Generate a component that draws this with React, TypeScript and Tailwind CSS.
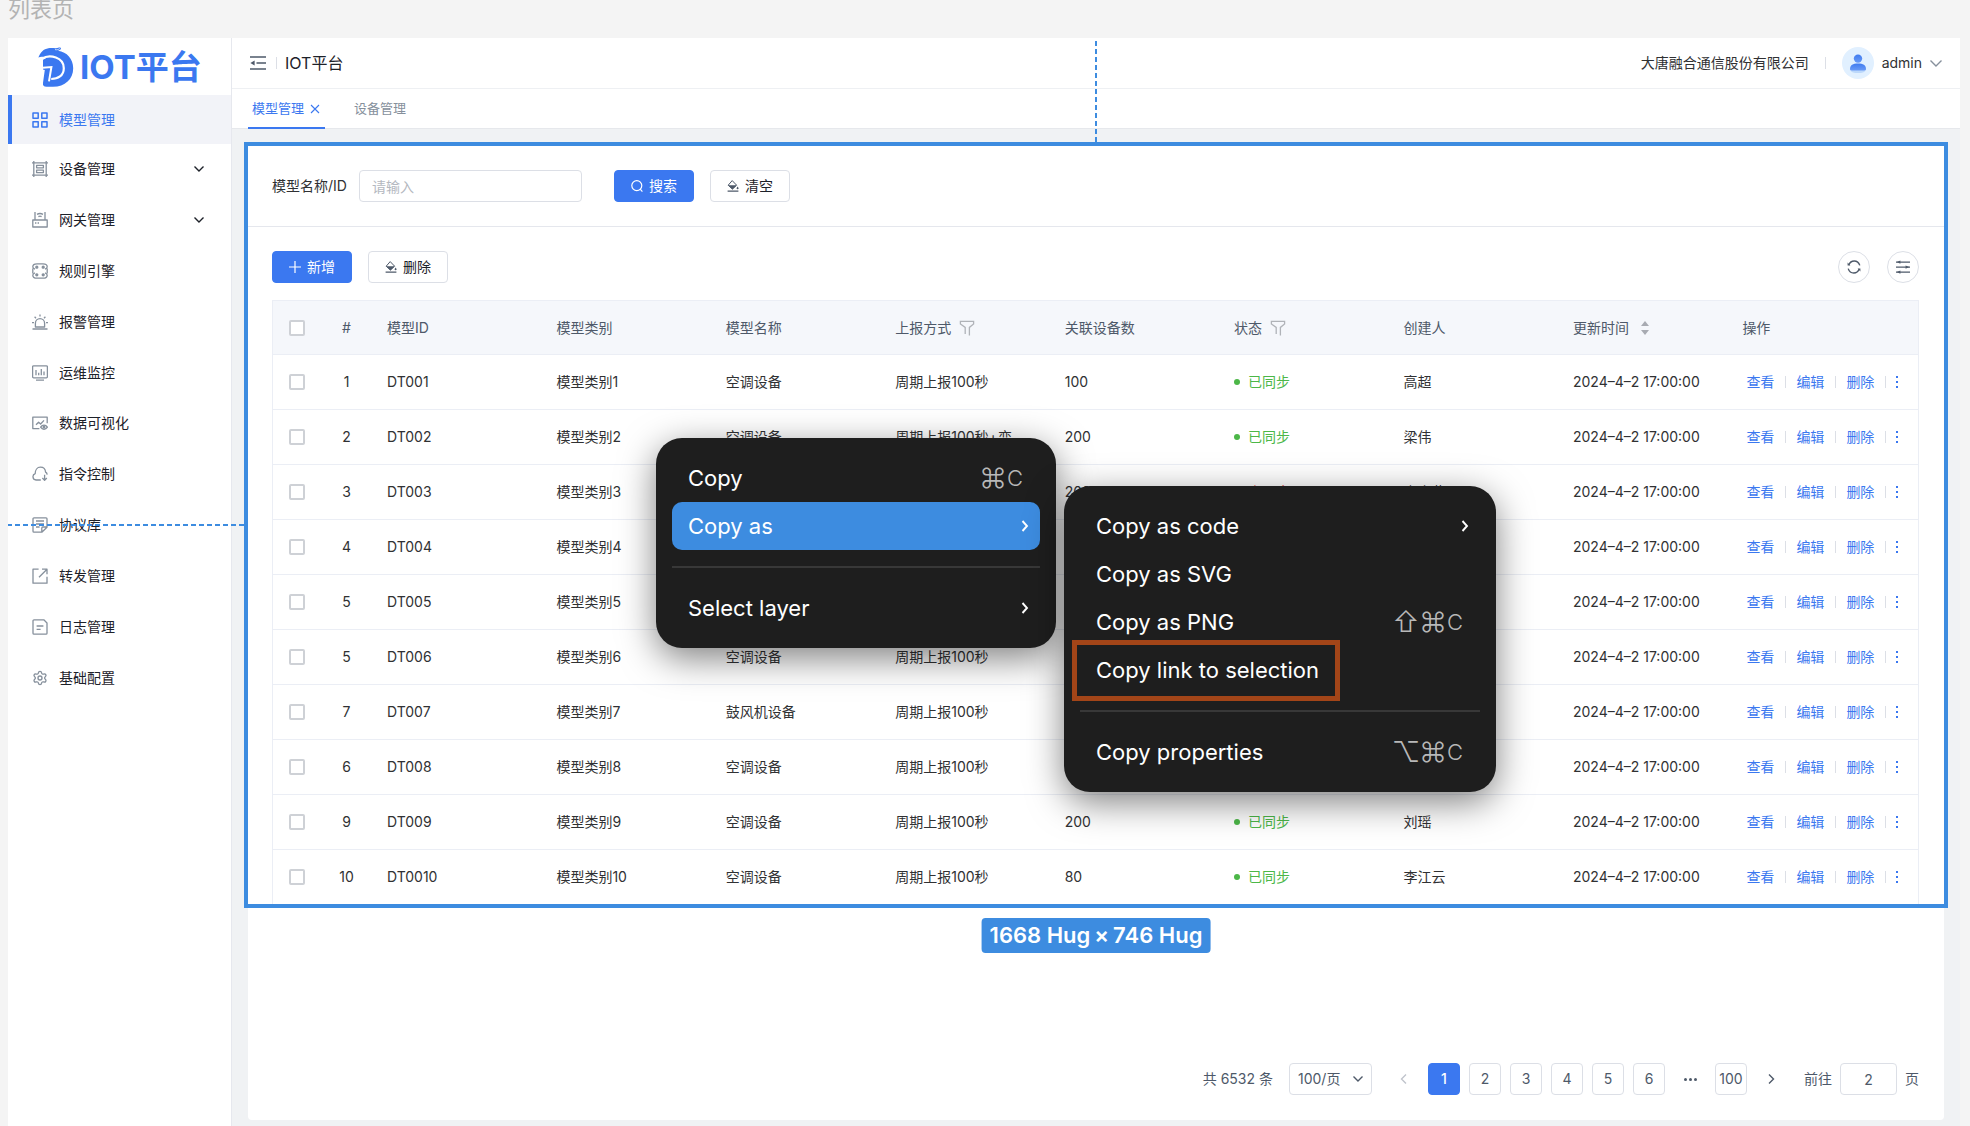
import React from 'react';
import { Settings } from 'lucide-react';

interface NavItem {
  label: string;
  icon: React.ReactNode;
  expandable?: boolean;
}

interface ModelRow {
  no: number;
  id: string;
  category: string;
  name: string;
  report: string;
  devices: number;
  synced: boolean;
  creator: string;
}

function NavIcon({ children }: { children: React.ReactNode }) {
  return (
    <svg
      viewBox="0 0 16 16"
      className="size-4 shrink-0"
      fill="none"
      stroke="currentColor"
      strokeWidth="1.3"
      strokeLinejoin="round"
      aria-hidden="true"
    >
      {children}
    </svg>
  );
}

const NAV_ITEMS: NavItem[] = [
  {
    label: '模型管理',
    icon: (
      <NavIcon>
        <path d="M1 1h5.2v5.2H1zM9.8 1H15v5.2H9.8zM1 9.8h5.2V15H1zM9.8 9.8H15V15H9.8z" strokeWidth="1.5" />
      </NavIcon>
    ),
  },
  {
    label: '设备管理',
    expandable: true,
    icon: (
      <NavIcon>
        <path d="M1.8 0v16M14.2 0v16M0 1.8h16M0 14.2h16" />
        <path d="M4.6 4.4h6.8v2.4H4.6zM4.6 9.2h6.8v2.4H4.6z" />
      </NavIcon>
    ),
  },
  {
    label: '网关管理',
    expandable: true,
    icon: (
      <NavIcon>
        <path d="M.8 8h14.4v7H.8zM3 8V0M13 8V0" />
        <path d="M3 11h1.4M5.600 11H7M5 2.4c2-1.2 4-1.2 6 0M6.4 4.600c1-.7 2.2-.7 3.2 0" />
      </NavIcon>
    ),
  },
  {
    label: '规则引擎',
    icon: (
      <NavIcon>
        <path d="M5 .8h6M5 15.2h6M.8 5.4v5.2M15.2 5.4v5.2" />
        <path d="M5 .8C2 .8.8 2 .8 3.8c0 1.4.8 2 2.2 2.4M11 .8c3 0 4.2 1.2 4.2 3 0 1.4-.8 2-2.2 2.4M5 15.2c-3 0-4.2-1.2-4.2-3 0-1.4.8-2 2.2-2.4M11 15.2c3 0 4.2-1.2 4.2-3 0-1.4-.8-2-2.2-2.4" />
        <circle cx="4.8" cy="4.2" r="1" fill="currentColor" />
        <circle cx="11.2" cy="4.2" r="1" fill="currentColor" />
        <circle cx="4.8" cy="11.8" r="1" fill="currentColor" />
        <circle cx="11.2" cy="11.8" r="1" fill="currentColor" />
      </NavIcon>
    ),
  },
  {
    label: '报警管理',
    icon: (
      <NavIcon>
        <path d="M.5 15h15M3.4 13V9.2a4.6 4.6 0 0 1 9.2 0V13zM0 8.6h2M14 8.6h2M8 .4v2M2.6 2.8 4 4.2M13.4 2.8 12 4.2" />
      </NavIcon>
    ),
  },
  {
    label: '运维监控',
    icon: (
      <NavIcon>
        <rect x=".6" y=".8" width="14.8" height="12" rx="1" />
        <path d="M4 5v5.2M6.7 7.8v2.4M9.3 4v6.2M12 6.6v3.6M4 15.2h8" />
      </NavIcon>
    ),
  },
  {
    label: '数据可视化',
    icon: (
      <NavIcon>
        <path d="M7.4 13.6H.8V2.2h14.4v6" />
        <path d="m4 9.8 2.6-2.6L8.6 9 12 5.4" />
        <path d="M8.600 12.2c1.8-2.8 5-2.8 6.8 0-1.8 2.8-5 2.8-6.8 0z" />
        <circle cx="12" cy="12.2" r=".8" />
      </NavIcon>
    ),
  },
  {
    label: '指令控制',
    icon: (
      <NavIcon>
        <path d="M8.800 14H4A3.3 3.3 0 0 1 3.200 7.600C3.200 4 5.200 1.200 8.400 1.200c3 0 5 2 5.200 5 .8.400 1.400 1.200 1.600 2.400M12.600 8.800V14M10.400 12l2.200 2.400L14.800 12" />
      </NavIcon>
    ),
  },
  {
    label: '协议库',
    icon: (
      <NavIcon>
        <path d="M9.8 15.2H2a1 1 0 0 1-1-1V1.8a1 1 0 0 1 1-1h12a1 1 0 0 1 1 1v8.4l-5.2 5zM9.8 15V11a1 1 0 0 1 1-1H15M4 4h8M4 7h8M4 10h3.6" />
      </NavIcon>
    ),
  },
  {
    label: '转发管理',
    icon: (
      <NavIcon>
        <path d="M6.6 1.2H1v14h14V8.800M10 1.2h5v5M15 1.2l-8 8" />
      </NavIcon>
    ),
  },
  {
    label: '日志管理',
    icon: (
      <NavIcon>
        <path d="M2 .8h9.8L15 4v10.2a1 1 0 0 1-1 1H2a1 1 0 0 1-1-1V1.8a1 1 0 0 1 1-1zM4.6 7h6.8M4.6 10.4h4" />
      </NavIcon>
    ),
  },
  { label: '基础配置', icon: <Settings className="size-4 shrink-0" strokeWidth={2} aria-hidden="true" /> },
];

const ROWS: ModelRow[] = [
  { no: 1, id: 'DT001', category: '模型类别1', name: '空调设备', report: '周期上报100秒', devices: 100, synced: true, creator: '高超' },
  { no: 2, id: 'DT002', category: '模型类别2', name: '空调设备', report: '周期上报100秒+变', devices: 200, synced: true, creator: '梁伟' },
  { no: 3, id: 'DT003', category: '模型类别3', name: '空调设备', report: '周期上报100秒', devices: 200, synced: false, creator: '李小燕' },
  { no: 4, id: 'DT004', category: '模型类别4', name: '空调设备', report: '周期上报100秒', devices: 200, synced: true, creator: '高超' },
  { no: 5, id: 'DT005', category: '模型类别5', name: '空调设备', report: '周期上报100秒', devices: 200, synced: true, creator: '梁伟' },
  { no: 5, id: 'DT006', category: '模型类别6', name: '空调设备', report: '周期上报100秒', devices: 200, synced: true, creator: '刘瑶' },
  { no: 7, id: 'DT007', category: '模型类别7', name: '鼓风机设备', report: '周期上报100秒', devices: 100, synced: true, creator: '高超' },
  { no: 6, id: 'DT008', category: '模型类别8', name: '空调设备', report: '周期上报100秒', devices: 200, synced: true, creator: '梁伟' },
  { no: 9, id: 'DT009', category: '模型类别9', name: '空调设备', report: '周期上报100秒', devices: 200, synced: true, creator: '刘瑶' },
  { no: 10, id: 'DT0010', category: '模型类别10', name: '空调设备', report: '周期上报100秒', devices: 80, synced: true, creator: '李江云' },
];

function Chevron({ className = '', d = 'm1.5 3.5 4.5 4.5 4.5-4.5', width = 1.4 }) {
  return (
    <svg viewBox="0 0 12 12" className={`size-3 shrink-0 ${className}`} fill="none" stroke="currentColor" strokeWidth={width} aria-hidden="true">
      <path d={d} />
    </svg>
  );
}

function BucketIcon() {
  return (
    <svg viewBox="0 0 12 12" className="size-3 shrink-0 text-[#4e5969]" aria-hidden="true">
      <path d="M5.2.6 9.6 5.2 5.4 9 1.2 5.2z" fill="none" stroke="currentColor" />
      <path d="M1 5.2h8.8L5.4 9.4zM10.600 6.4c.8 1 1 1.5 1 1.9a1 1 0 0 1-2 0c0-.4.3-.9 1-1.9zM.6 10.600h10.8v1.2H.6z" fill="currentColor" />
    </svg>
  );
}

function FilterIcon() {
  return (
    <svg viewBox="0 0 16 16" className="size-4 text-[#b0b3b8]" fill="none" stroke="currentColor" strokeWidth="1.3" aria-hidden="true">
      <path d="M6.2 14V7.4L1.4 4V1.4h13.2V4l-4.2 3.4v8.2" />
    </svg>
  );
}

function Logo() {
  return (
    <svg viewBox="0 0 36 40" className="h-10 w-9 shrink-0" aria-hidden="true">
      <path
        d="M.4 10.6C2.4 5 5.6 2 10.4 1.2c4-.8 7.2.8 10.6-.6 1-.4 2 .2 2 1-.2 1.2-1.4 1.8-3 2.2C29 5 35.2 12 35.2 21.2 35.2 32 27 39.8 15 39.8H8.600c-3 0-4-1.4-3.600-4L6.800 23 5 22.600V12.800L8 11.200C5.200 9.200 2.400 9.600.4 10.600z"
        fill="#3b78f0"
      />
      <path d="M3.600 11.800C12 6.800 25.800 10.400 25.800 21.200c0 7.600-6 10.800-12.600 10.800" fill="none" stroke="#fff" strokeWidth="2.200" />
      <path d="M4.600 20.800 13.400 20 11 34.400" fill="none" stroke="#fff" strokeWidth="2" />
      <path d="M17 2.600c2 .4 3.600 0 4.800-1.200" fill="none" stroke="#fff" strokeWidth=".7" />
    </svg>
  );
}

function NavLink({ item, active = false }: { item: NavItem; active?: boolean }) {
  return (
    <a
      href="#"
      className={`flex items-center gap-[11px] border-l-4 pr-[26px] pl-5 text-sm ${
        active ? 'h-[49px] border-[#3b78f0] bg-[#f2f3f8] text-[#3b78f0]' : 'border-transparent text-[#1d2129]'
      }`}
    >
      <span className={active ? 'text-[#3b78f0]' : 'text-[#86909c]'}>{item.icon}</span>
      <span className="flex-1">{item.label}</span>
      {item.expandable && <Chevron />}
    </a>
  );
}

function Sidebar() {
  const [current, ...others] = NAV_ITEMS;

  return (
    <aside className="w-[224px] shrink-0 border-r border-[#e6e8ee] bg-white">
      <div className="flex h-[57px] items-center gap-[6px] pl-[30px]">
        <Logo />
        <span className="text-[33px] leading-10 font-bold whitespace-nowrap text-[#3b78f0]">IOT平台</span>
      </div>
      <nav>
        <NavLink item={current} active />
        <div className="grid h-[559px] auto-rows-fr">
          {others.map((item) => (
            <NavLink key={item.label} item={item} />
          ))}
        </div>
      </nav>
    </aside>
  );
}

function TopBar() {
  return (
    <header className="flex h-[51px] items-center justify-between border-b border-[#eef0f3] bg-white px-[18px] text-sm">
      <div className="flex items-center">
        <button type="button" aria-label="收起菜单" className="text-[#4e5969]">
          <svg viewBox="0 0 16 14" className="h-[14px] w-4" fill="none" stroke="currentColor" strokeWidth="1.4" aria-hidden="true">
            <path d="M0 1h16M6.5 7H16M0 13h16" />
            <path d="M4.6 4.4v5.2L.4 7z" fill="currentColor" stroke="none" />
          </svg>
        </button>
        <span className="mr-2 ml-[10px] h-3 w-px bg-[#dcdfe6]" />
        <h1 className="text-base text-[#1d2129]">IOT平台</h1>
      </div>
      <div className="flex items-center text-[#303133]">
        <span>大唐融合通信股份有限公司</span>
        <span className="mx-4 h-3 w-px bg-[#dcdfe6]" />
        <button type="button" className="flex items-center gap-2">
          <svg viewBox="0 0 32 32" className="size-8" aria-hidden="true">
            <defs>
              <linearGradient id="person" x1="0" y1="0" x2="0" y2="1">
                <stop offset="0" stopColor="#3f7bf0" />
                <stop offset="1" stopColor="#6a9bf6" />
              </linearGradient>
            </defs>
            <circle cx="16" cy="16" r="16" fill="#e1f0ff" />
            <ellipse cx="16" cy="24" rx="7" ry="2" fill="#bcd8fb" />
            <path d="M8 22c0-4 3-5.6 8-5.6s8 1.6 8 5.6c0 1-.6 1.6-1.6 1.6H9.600C8.600 23.600 8 23 8 22z" fill="url(#person)" />
            <circle cx="16" cy="11.6" r="4.2" fill="url(#person)" />
          </svg>
          <span>admin</span>
          <Chevron className="text-[#86909c]" d="m.5 3.5 5.5 5.5 5.5-5.5" />
        </button>
      </div>
    </header>
  );
}

function TabBar() {
  return (
    <div className="flex h-10 border-b border-[#e6e8ec] bg-white pl-4 text-[13px]">
      <div className="-mb-px flex items-center gap-[6px] border-b-2 border-[#3b78f0] px-1 pt-[2px] text-[#3b78f0]">
        <a href="#">模型管理</a>
        <button type="button" aria-label="关闭" className="pr-px">
          <svg viewBox="0 0 10 10" className="size-[10px]" fill="none" stroke="currentColor" strokeWidth="1.1" aria-hidden="true">
            <path d="m1 1 8 8M9 1 1 9" />
          </svg>
        </button>
      </div>
      <a href="#" className="ml-[29px] flex items-center pt-px text-[#86909c]">
        设备管理
      </a>
    </div>
  );
}

const primaryButton =
  'flex h-8 w-20 items-center justify-center gap-[6px] rounded border border-[#3b78f0] bg-[#3b78f0] text-sm text-white';
const plainButton =
  'flex h-8 w-20 items-center justify-center gap-[6px] rounded border border-[#dcdfe6] bg-white text-sm text-[#1d2129]';
const roundButton = 'flex size-8 items-center justify-center rounded-full border border-[#dcdfe6] text-[#4e5969]';

function SearchBar() {
  return (
    <form className="flex h-[81px] items-center border-b border-[#e5e7ed] px-6 text-sm">
      <label htmlFor="keyword" className="text-[#303133]">
        模型名称/ID
      </label>
      <input
        id="keyword"
        placeholder="请输入"
        className="ml-3 h-8 w-[223px] rounded border border-[#dcdfe6] px-3 placeholder:text-[#b4b8bf]"
      />
      <button type="button" className={`ml-8 ${primaryButton}`}>
        <svg viewBox="0 0 12 12" className="size-3" fill="none" stroke="currentColor" strokeWidth="1.2" aria-hidden="true">
          <circle cx="5.8" cy="5.6" r="5" />
          <path d="m9.2 9.2 2.2 2.4" />
        </svg>
        搜索
      </button>
      <button type="button" className={`ml-4 ${plainButton}`}>
        <BucketIcon />
        清空
      </button>
    </form>
  );
}

function Toolbar() {
  return (
    <div className="flex items-center pt-6 pr-[25px] pb-[17px] pl-6">
      <button type="button" className={primaryButton}>
        <svg viewBox="0 0 12 12" className="size-3" stroke="currentColor" strokeWidth="1.2" aria-hidden="true">
          <path d="M6 0v12M0 6h12" />
        </svg>
        新增
      </button>
      <button type="button" className={`ml-4 ${plainButton}`}>
        <BucketIcon />
        删除
      </button>
      <button type="button" aria-label="刷新" className={`ml-auto ${roundButton}`}>
        <svg viewBox="0 0 14 14" className="size-[14px]" fill="none" stroke="currentColor" strokeWidth="1.4" aria-hidden="true">
          <path d="M1.8 5C2.800 2.400 5 1 7.200 1c2.400 0 4.600 1.400 5.600 4.400M12.200 9C11.200 11.600 9 13 6.800 13c-2.400 0-4.600-1.400-5.600-4.400" />
          <path d="M.6 2.600v3h2.800zM13.400 11.400v-3h-2.800z" fill="currentColor" stroke="none" />
        </svg>
      </button>
      <button type="button" aria-label="列设置" className={`ml-[17px] ${roundButton}`}>
        <svg viewBox="0 0 14 14" className="size-[14px]" fill="currentColor" aria-hidden="true">
          <path d="M0 1.4h14v1.3H0zM0 6.4h14v1.3H0zM0 11.4h14v1.3H0z" />
          <path d="M4.400.4v3.300L.8 2zM9.600 5.400v3.300L13.200 7zM4.400 10.400v3.300L.8 12z" />
        </svg>
      </button>
    </div>
  );
}

function RowCheckbox({ label }: { label: string }) {
  return (
    <input
      type="checkbox"
      aria-label={label}
      className="block size-4 appearance-none rounded-xs border-2 border-[#ced1d6] bg-white"
    />
  );
}

function Separator() {
  return <span className="mr-[10px] ml-[11px] h-3 w-px bg-[#dcdfe6]" />;
}

function RowActions() {
  return (
    <div className="flex items-center pl-1 text-[#3b78f0]">
      <a href="#">查看</a>
      <Separator />
      <a href="#">编辑</a>
      <Separator />
      <a href="#">删除</a>
      <Separator />
      <button type="button" aria-label="更多">
        <svg viewBox="0 0 2 12" className="h-3 w-[2px]" fill="currentColor" aria-hidden="true">
          <path d="M0 0h2v2H0zM0 5h2v2H0zM0 10h2v2H0z" />
        </svg>
      </button>
    </div>
  );
}

const headCell = 'h-[55px] w-[10.3%] border-y border-b-[#ebeef5] border-t-[#ebeef5] px-4 text-left font-normal whitespace-nowrap';
const bodyCell = 'h-[55px] border-b border-[#ebeef5] px-4 whitespace-nowrap group-last:h-[54px] group-last:border-b-0';

function ModelTable() {
  return (
    <table className="w-full table-fixed border-separate border-spacing-0 border-x border-[#ebeef5] text-sm text-[#303133]">
      <thead className="bg-[#f5f7fb] text-[#4e5969]">
        <tr>
          <th className="w-[49px] border-y border-[#ebeef5] pl-4">
            <RowCheckbox label="全选" />
          </th>
          <th className="w-[49px] border-y border-[#ebeef5] text-center font-normal">#</th>
          <th className={headCell}>模型ID</th>
          <th className={headCell}>模型类别</th>
          <th className={headCell}>模型名称</th>
          <th className={headCell}>
            <span className="flex items-center gap-2">
              上报方式
              <FilterIcon />
            </span>
          </th>
          <th className={headCell}>关联设备数</th>
          <th className={headCell}>
            <span className="flex items-center gap-2">
              状态
              <FilterIcon />
            </span>
          </th>
          <th className={headCell}>创建人</th>
          <th className={headCell}>
            <span className="flex items-center gap-3">
              更新时间
              <svg viewBox="0 0 8 14" className="h-[14px] w-2 text-[#a8abb2]" fill="currentColor" aria-hidden="true">
                <path d="M4 0l4 5H0zM4 14 0 9h8z" />
              </svg>
            </span>
          </th>
          <th className="border-y border-[#ebeef5] px-4 text-left font-normal">操作</th>
        </tr>
      </thead>
      <tbody>
        {ROWS.map((row) => (
          <tr key={row.id} className="group">
            <td className={`${bodyCell} pr-0`}>
              <RowCheckbox label={row.id} />
            </td>
            <td className="border-b border-[#ebeef5] text-center group-last:border-b-0">{row.no}</td>
            <td className={bodyCell}>{row.id}</td>
            <td className={bodyCell}>{row.category}</td>
            <td className={bodyCell}>{row.name}</td>
            <td className={bodyCell}>{row.report}</td>
            <td className={bodyCell}>{row.devices}</td>
            <td className={bodyCell}>
              <span className={`flex items-center gap-2 ${row.synced ? 'text-[#4cb748]' : 'text-[#e5484d]'}`}>
                <span className="size-[6px] rounded-full bg-current" />
                {row.synced ? '已同步' : '未同步'}
              </span>
            </td>
            <td className={bodyCell}>{row.creator}</td>
            <td className={bodyCell}>2024–4–2 17:00:00</td>
            <td className={bodyCell}>
              <RowActions />
            </td>
          </tr>
        ))}
      </tbody>
    </table>
  );
}

const pageButton = 'h-8 w-8 rounded border text-center';

function Pagination() {
  return (
    <div className="flex items-center justify-end pr-[25px] pb-[25px] text-sm text-[#4e5969]">
      <span>共 6532 条</span>
      <div className="relative ml-4">
        <select aria-label="每页条数" className="h-8 w-[83px] appearance-none rounded border border-[#dcdfe6] bg-white pl-2">
          <option>100/页</option>
        </select>
        <Chevron className="pointer-events-none absolute top-[10px] right-2" />
      </div>
      <button type="button" aria-label="上一页" className="mr-[18px] ml-[26px] text-[#c0c4cc]">
        <Chevron d="M8 1.5 3.5 6 8 10.5" />
      </button>
      <div className="flex items-center gap-[9px]">
        {[1, 2, 3, 4, 5, 6].map((page) => (
          <button
            key={page}
            type="button"
            className={`${pageButton} ${page === 1 ? 'border-[#3b78f0] bg-[#3b78f0] font-medium text-white' : 'border-[#dcdfe6]'}`}
          >
            {page}
          </button>
        ))}
        <span className="flex w-8 items-center justify-center gap-[2px]">
          <span className="size-[3px] rounded-full bg-current" />
          <span className="size-[3px] rounded-full bg-current" />
          <span className="size-[3px] rounded-full bg-current" />
        </span>
        <button type="button" className={`${pageButton} border-[#dcdfe6]`}>
          100
        </button>
      </div>
      <button type="button" aria-label="下一页" className="mr-[27px] ml-[18px]">
        <Chevron d="M4 1.5 8.5 6 4 10.5" />
      </button>
      <label htmlFor="jump">前往</label>
      <input id="jump" defaultValue="2" className="mx-2 h-8 w-[57px] rounded border border-[#dcdfe6] text-center" />
      <span>页</span>
    </div>
  );
}

const KEY_STYLES: Record<string, string> = {
  '⇧': 'w-7 text-[28px]',
  '⌥': 'w-7 text-[28px]',
  '⌘': 'w-[26px] text-[28px]',
  C: 'w-[18px] text-[22px]',
};

interface MenuItemProps {
  label: string;
  keys?: string[];
  submenu?: boolean;
  highlighted?: boolean;
}

function MenuItem({ label, keys, submenu, highlighted }: MenuItemProps) {
  return (
    <button
      type="button"
      className={`flex h-12 w-full items-center justify-between rounded-[10px] pr-[9px] pl-4 text-white ${highlighted ? 'bg-[#3d8ce0]' : ''}`}
    >
      <span>{label}</span>
      {submenu && <Chevron d="m3.5 1 4.500 5-4.500 5" width={1.9} />}
      {keys && (
        <span className="mr-[7px] flex items-center font-light text-[#b8b8b8]">
          {keys.map((key) => (
            <kbd key={key} className={`flex justify-center font-[inherit] leading-8 ${KEY_STYLES[key]}`}>
              {key}
            </kbd>
          ))}
        </span>
      )}
    </button>
  );
}

const menuPanel = 'absolute rounded-[26px] bg-[#1e1e1e] p-4 text-[22px] leading-8 shadow-[0_10px_36px_rgba(0,0,0,0.5)]';

function ContextMenus() {
  return (
    <>
      <div className={`${menuPanel} top-[438px] left-[656px] w-[400px]`}>
        <MenuItem label="Copy" keys={['⌘', 'C']} />
        <MenuItem label="Copy as" submenu highlighted />
        <hr className="my-4 border-t-2 border-[#383838]" />
        <MenuItem label="Select layer" submenu />
      </div>
      <div className={`${menuPanel} top-[486px] left-[1064px] w-[432px]`}>
        <MenuItem label="Copy as code" submenu />
        <MenuItem label="Copy as SVG" />
        <MenuItem label="Copy as PNG" keys={['⇧', '⌘', 'C']} />
        <div className="relative">
          <MenuItem label="Copy link to selection" />
          <span className="absolute -top-[6px] -left-2 h-[61px] w-[268px] border-[5px] border-[#a34518]" />
        </div>
        <hr className="my-4 border-t-2 border-[#383838]" />
        <MenuItem label="Copy properties" keys={['⌥', '⌘', 'C']} />
      </div>
    </>
  );
}

// Frame, alignment guides and size label of the selected section
function SelectionOverlay() {
  return (
    <>
      <div className="pointer-events-none absolute -inset-1 border-4 border-[#3d8ce0]" />
      <div className="absolute bottom-full left-1/2 mb-1 h-[104px] w-[2px] -translate-x-1/2 bg-[repeating-linear-gradient(0deg,#3d8ce0_0_5px,transparent_5px_8px)]" />
      <div className="absolute top-1/2 right-full mr-1 h-[2px] w-[236px] -translate-y-1/2 bg-[repeating-linear-gradient(270deg,#3d8ce0_0_5px,transparent_5px_8px)]" />
      <div className="absolute top-full left-1/2 mt-[14px] flex -translate-x-1/2 gap-1 rounded bg-[#3d8ce0] px-2 text-[22px] leading-[35px] font-semibold whitespace-nowrap text-white">
        <span>1668 Hug</span>
        <span>×</span>
        <span>746 Hug</span>
      </div>
    </>
  );
}

export default function App() {
  return (
    <div className="relative flex min-h-screen flex-col bg-[#f4f4f4] pr-[10px] pl-2 font-['Inter','Noto_Sans_CJK_SC',sans-serif]">
      <div className="h-[38px] text-[22px] leading-[18px] text-[#b3b3b3]">列表页</div>
      <div className="flex flex-1">
        <Sidebar />
        <div className="flex min-w-0 flex-1 flex-col bg-[#f0f2f4]">
          <TopBar />
          <TabBar />
          <main className="flex flex-1 flex-col px-4 pt-[17px] pb-[6px]">
            <div className="flex flex-1 flex-col justify-between rounded-b bg-white">
              <section className="relative">
                <SearchBar />
                <Toolbar />
                <div className="pr-[25px] pl-6">
                  <ModelTable />
                </div>
                <SelectionOverlay />
              </section>
              <Pagination />
            </div>
          </main>
        </div>
      </div>
      <ContextMenus />
    </div>
  );
}
